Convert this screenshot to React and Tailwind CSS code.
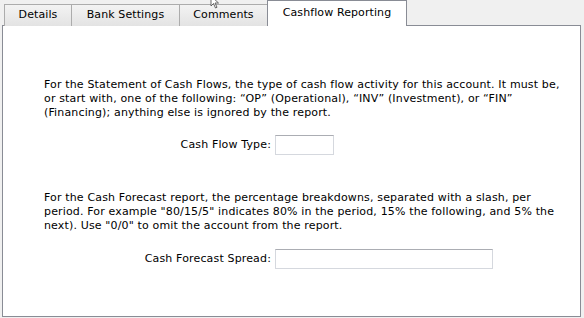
import React from "react";

const font = { fontFamily: "'DejaVu Sans', Verdana, sans-serif" };

function Tab({ label, w }) {
  return (
    <div
      className={`h-[22px] ${w} border border-b-0 border-[#acacac] bg-gradient-to-b from-[#f3f3f3] to-[#e3e3e3] flex items-center justify-center text-[11px] tracking-[0.1px] text-black -mr-px`}
    >
      {label}
    </div>
  );
}

export default function App() {
  return (
    <div
      className="w-[584px] h-[318px] bg-[#f0f0f0] relative overflow-hidden"
      style={font}
    >
      <div className="flex items-end h-[26px] pl-[4px] relative z-10">
        <Tab label="Details" w="w-[68px]" />
        <Tab label="Bank Settings" w="w-[109px]" />
        <Tab label="Comments" w="w-[89px]" />
        <div className="h-[26px] w-[140px] border border-b-0 border-[#898c95] bg-white flex items-start justify-center pt-[4px] text-[11px] tracking-[0.1px] text-black">
          Cashflow Reporting
        </div>
      </div>
      <div className="ml-[2px] w-[579px] h-[292px] -mt-px border border-[#898c95] bg-white">
        <div className="pl-[41px] pt-[52px] text-[11px] tracking-[0.15px] leading-[14px] text-black">
          <p>
            For the Statement of Cash Flows, the type of cash flow activity for this account. It must be,
            <br />
            or start with, one of the following: “OP” (Operational), “INV” (Investment), or “FIN”
            <br />
            (Financing); anything else is ignored by the report.
          </p>
          <div className="flex items-center mt-[15px] h-[20px]">
            <div className="w-[231px] text-right pr-[4px]">Cash Flow Type:</div>
            <div className="w-[59px] h-[20px] border border-[#d5d8de] border-t-[#abadb3]" />
          </div>
          <p className="mt-[36px]">
            For the Cash Forecast report, the percentage breakdowns, separated with a slash, per
            <br />
            period. For example "80/15/5" indicates 80% in the period, 15% the following, and 5% the
            <br />
            next). Use "0/0" to omit the account from the report.
          </p>
          <div className="flex items-center mt-[16px] h-[20px]">
            <div className="w-[231px] text-right pr-[4px]">Cash Forecast Spread:</div>
            <div className="w-[218px] h-[20px] border border-[#d5d8de] border-t-[#abadb3]" />
          </div>
        </div>
      </div>
      <svg
        className="absolute left-[210px] top-[-4px] z-20"
        width="12"
        height="14"
        viewBox="0 0 12 14"
      >
        <path d="M1 0 L1 10 L3.5 7.5 L5.5 12 L7 11.3 L5 7 L8.5 7 Z" fill="white" stroke="#444" strokeWidth="0.8" />
      </svg>
    </div>
  );
}
